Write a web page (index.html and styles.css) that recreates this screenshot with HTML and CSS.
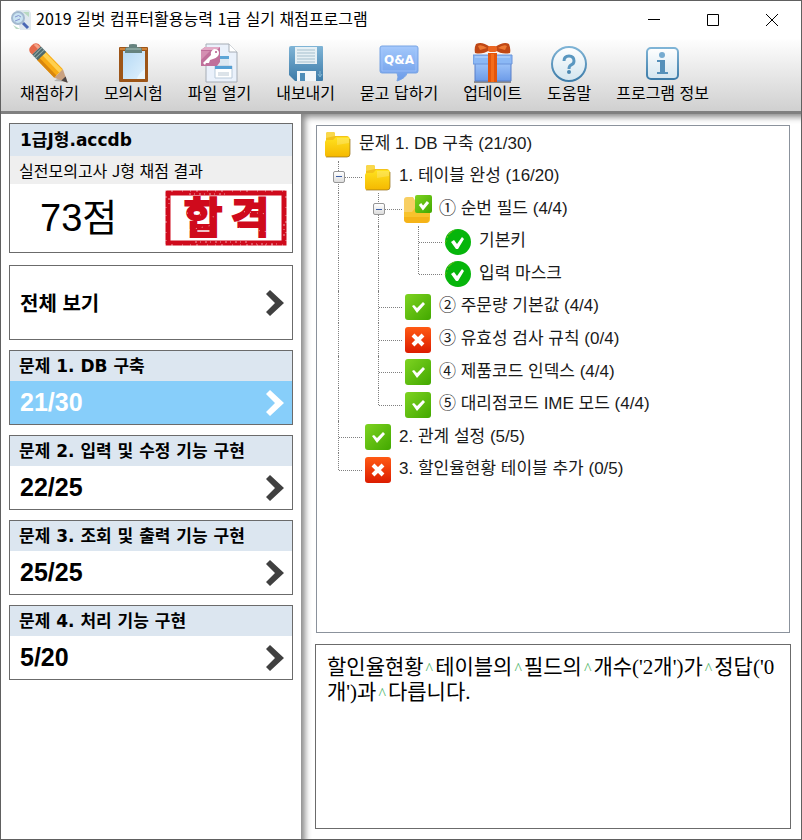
FILE: index.html
```html
<!DOCTYPE html>
<html lang="ko">

<head>
  <meta charset="UTF-8">
  <meta name="viewport" content="width=device-width, initial-scale=1">
  <title>2019 길벗 컴퓨터활용능력 1급 실기 채점프로그램</title>
  <link rel="stylesheet" href="styles.css">
</head>

<body>
  <svg class="sprite" aria-hidden="true">
    <defs>
      <linearGradient id="gold" x1="0" y1="0" x2="0" y2="1">
        <stop offset="0" stop-color="#ffe21f" />
        <stop offset="1" stop-color="#f5b800" />
      </linearGradient>
      <linearGradient id="green" x1="0" y1="0" x2="1" y2="1">
        <stop offset="0" stop-color="#7ed321" />
        <stop offset="1" stop-color="#42a800" />
      </linearGradient>
      <linearGradient id="red" x1="0" y1="0" x2="0" y2="1">
        <stop offset="0" stop-color="#ff5a14" />
        <stop offset="1" stop-color="#dc1c00" />
      </linearGradient>
      <linearGradient id="steel" x1="0" y1="0" x2="0" y2="1">
        <stop offset="0" stop-color="#7fb4d6" />
        <stop offset="1" stop-color="#3c7ba8" />
      </linearGradient>
      <linearGradient id="pale" x1="0" y1="0" x2="0" y2="1">
        <stop offset="0" stop-color="#ffffff" />
        <stop offset="1" stop-color="#d3e5ef" />
      </linearGradient>
      <linearGradient id="sky" x1="0" y1="0" x2="0" y2="1">
        <stop offset="0" stop-color="#a3c8fb" />
        <stop offset="1" stop-color="#6c9be8" />
      </linearGradient>
      <linearGradient id="paper" x1="0" y1="0" x2="1" y2="1">
        <stop offset="0" stop-color="#b5d9f5" />
        <stop offset="1" stop-color="#e0f1fd" />
      </linearGradient>
    </defs>
    <symbol id="folder" viewBox="0 0 28 28">
      <path d="M2 4q0-2 2-2h5q2 0 2 2v2h12q2 0 2 2v17H2z" fill="#f3c21a" />
      <path d="M2 4q0-2 2-2h5q2 0 2 2v2L2 8z" fill="#f9d84c" />
      <path d="M1 12q0-2 2-2h6l3-3h12q2 0 2 2v15q0 3-3 3H3q-2 0-2-2z" fill="url(#gold)" />
      <path d="M13 8h11q1 0 1 1v4l-12 2z" fill="#fff" opacity=".2" />
      <path d="M2 27h21q3 0 3-3V9" fill="none" stroke="#96711c" stroke-opacity=".7" />
    </symbol>
    <symbol id="folder-check" viewBox="0 0 28 28">
      <path d="M0 5q0-3 3-3h6l3 5v20H3q-3 0-3-3z" fill="#f8cf63" />
      <path d="M0 17h8l3-4h15v11q0 4-4 4H4q-4 0-4-4z" fill="#f8c32c" />
      <path d="M0 22h25v2q0 4-4 4H4q-4 0-4-4z" fill="#f3a80c" opacity=".6" />
      <rect x="11" y="0" width="17" height="18" rx="2" fill="url(#green)" />
      <path d="m16 9 3 4 5-6" fill="none" stroke="#fff" stroke-width="3" />
    </symbol>
    <symbol id="pass" viewBox="0 0 28 28">
      <rect x="1" y="1" width="26" height="26" rx="3" fill="url(#green)" />
      <path d="m8 13 2-1 3 3 6-6 2 2-8 9z" fill="#fff" />
    </symbol>
    <symbol id="fail" viewBox="0 0 28 28">
      <rect x="1" y="1" width="26" height="26" rx="3" fill="url(#red)" />
      <path d="m9 9 10 10m0-10L9 19" stroke="#fff" stroke-width="4" />
    </symbol>
    <symbol id="done" viewBox="0 0 28 28">
      <circle cx="14" cy="14" r="13" fill="#06b50b" />
      <path d="M3 10q2-6 8-8M1 15l2-3M5 6l3-2" fill="none" stroke="#7bbb18" stroke-dasharray="2 1" />
      <path d="m7 14 3-2 3 4 5-7 2 2-6 10h-2z" fill="#fff" />
    </symbol>
    <symbol id="chevron" viewBox="0 0 18 28">
      <path d="m0 5 4-4 14 13L4 27l-4-4 9-9z" fill="currentColor" />
    </symbol>
  </svg>

  <header class="titlebar">
    <svg class="app-icon" viewBox="0 0 20 20" aria-hidden="true">
      <path d="M5 0h13l2 3v17H9z" fill="#dfe8ee" />
      <path d="M12 2h6v5zM2 15l7 4H5z" fill="#b9d9c2" />
      <circle cx="7" cy="8" r="6" fill="#c9e3f2" stroke="#a3b9cf" stroke-width="2" />
      <path d="M4 7q4-3 6 0M4 11l5-2" stroke="#8794d0" fill="none" />
      <path d="m12 13 5 5" stroke="#4a68b4" stroke-width="3" />
    </svg>
    <h1 class="title">2019 길벗 컴퓨터활용능력 1급 실기 채점프로그램</h1>
    <div class="window-buttons">
      <button type="button" aria-label="최소화"><svg viewBox="0 0 12 12"><path d="M0 5.500h12" /></svg></button>
      <button type="button" aria-label="최대화"><svg viewBox="0 0 12 12"><path d="M.5.5h11v11H.5z" /></svg></button>
      <button type="button" aria-label="닫기"><svg viewBox="0 0 12 12"><path d="m0 0 12 12m0-12L0 12" /></svg></button>
    </div>
  </header>

  <nav class="toolbar">
    <button type="button" class="tool">
      <svg viewBox="0 0 40 40" aria-hidden="true">
        <path d="M25 38q3-3 9-2l6 3z" fill="#b4b4b4" />
        <g transform="translate(6 6) rotate(46)">
          <path d="M9-6h25V6H9z" fill="#f8ab14" />
          <path d="M9-5h25v4H9z" fill="#ffd04f" />
          <path d="M9 3h25v3H9z" fill="#d8860e" />
          <path d="M34-6 47 0 34 6z" fill="#c9a181" />
          <path d="m41-3 6 3-6 3z" fill="#4b4444" />
          <path d="M2-6h8V6H2z" fill="#4f6a6d" />
          <path d="M4-6V6M7-6V6" stroke="#93aaa8" />
          <path d="M2-6V6h-3q-4-1-4-6t4-6z" fill="#e5694a" />
          <path d="M2-5h-3q-2 0-3 3h6z" fill="#f4a287" />
        </g>
      </svg>
      <span>채점하기</span>
    </button>
    <button type="button" class="tool">
      <svg viewBox="0 0 40 40" aria-hidden="true">
        <rect x="6" y="4" width="29" height="35" rx="1" fill="#9d5518" />
        <path d="M7 5h27v2H7z" fill="#cf8136" />
        <path d="M10 8h22v28H10z" fill="url(#paper)" />
        <path d="M24 36q1-5 8-10v10z" fill="#e9f7ff" />
        <path d="M12 6q0-2 4-2V2q0-1 4-1t4 1v2q5 0 5 2v4H12z" fill="#66837f" />
        <path d="M13 6h15" stroke="#a9c4bd" />
      </svg>
      <span>모의시험</span>
    </button>
    <button type="button" class="tool">
      <svg viewBox="0 0 40 40" aria-hidden="true">
        <path d="M7 1h23l8 8v30H7z" fill="#eaf1fb" stroke="#a5acb5" />
        <path d="M30 1v8h8" fill="#fff" stroke="#a5acb5" />
        <path d="M18 13h12v11H18z" fill="#dde8f1" />
        <path d="M18 13h12v3H18z" fill="#5da5d7" />
        <path d="M16 23h17v12H16z" fill="#fff" stroke="#b9cada" />
        <path d="M16 23h17v3H16z" fill="#55a0d5" />
        <path d="M19 29h11v4H19z" fill="#dce3e9" />
        <path d="m2 7 4-3h15v15l-3 4H2z" fill="#c0709b" />
        <path d="m2 7 4-3h15l-3 3z" fill="#e2aac6" />
        <path d="M2 8h9L2 17z" fill="#d48fb2" />
        <path d="m4 20 8-8q-1-4 3-6 5 0 5 4t-6 6l-3 1-1 3H7l-1 2z" fill="#fff" />
        <circle cx="17" cy="9" r="1" fill="#b35589" />
      </svg>
      <span>파일 열기</span>
    </button>
    <button type="button" class="tool">
      <svg viewBox="0 0 40 40" aria-hidden="true">
        <path d="M5 3h31q1 0 1 1v33q0 1-1 1H9l-6-6V5q0-2 2-2z" fill="url(#steel)" />
        <path d="M9 4h22v17H9z" fill="#e6f0f5" />
        <path d="M11 7h18M11 10h18M11 13h18M11 16h18M11 19h18" stroke="#a5bfcd" />
        <path d="M11 28h19v10H11z" fill="#f2f7fa" />
        <path d="M14 30h5v8h-5z" fill="#4e8db8" />
        <path d="M34 28v5m-2-2 2 3 2-3" fill="none" stroke="#86b8d4" />
      </svg>
      <span>내보내기</span>
    </button>
    <button type="button" class="tool">
      <svg viewBox="0 0 40 40" aria-hidden="true">
        <path d="M3 3h34q2 0 2 2v23q0 2-2 2h-9q-1 5-10 8 2-4 0-8H3q-2 0-2-2V5q0-2 2-2z" fill="url(#sky)" stroke="#78a4e5" />
        <path d="M3 5h34v23H3z" fill="none" stroke="#a9caff" opacity=".6" />
        <text x="20" y="21" class="qna">Q&amp;A</text>
      </svg>
      <span>묻고 답하기</span>
    </button>
    <button type="button" class="tool">
      <svg viewBox="0 0 40 40" aria-hidden="true">
        <path d="M1 38h37v2H1z" fill="#8d8d8d" />
        <path d="M2 18h36v20H2z" fill="url(#sky)" stroke="#597ec8" />
        <path d="M0 12h39v9H0z" fill="#8bb8f5" stroke="#6b94da" />
        <path d="M2 14h35" stroke="#bfdaff" />
        <path d="M15 10h9v29h-9z" fill="#e3550c" />
        <path d="M18 11h3v28h-3z" fill="#f56c1a" />
        <path d="M17 4Q9-2 3 1 1 5 2 10q7 2 15-3zM22 4q9-6 14-3 2 5 1 9-8 2-15-3z" fill="#bf4715" />
        <path d="M14 5Q8 1 5 3l2 4zM25 5q6-4 9-2l-2 4z" fill="#ed7933" />
        <rect x="15" y="3" width="9" height="6" rx="2" fill="#ea6521" />
      </svg>
      <span>업데이트</span>
    </button>
    <button type="button" class="tool">
      <svg viewBox="0 0 40 40" aria-hidden="true">
        <circle cx="20" cy="21" r="17" fill="url(#pale)" stroke="url(#steel)" stroke-width="2" />
        <path d="M15 18q0-5 5-5t5 5q0 3-3 4-2 1-2 4" fill="none" stroke="#5a97c0" stroke-width="3" />
        <circle cx="20" cy="29" r="2" fill="#4b88b2" />
      </svg>
      <span>도움말</span>
    </button>
    <button type="button" class="tool">
      <svg viewBox="0 0 40 40" aria-hidden="true">
        <rect x="4" y="5" width="31" height="31" rx="4" fill="url(#pale)" stroke="url(#steel)" stroke-width="2" />
        <circle cx="19" cy="12" r="3" fill="#76abd0" />
        <path d="M14 17h8v12h3v2H14v-2h3V19h-3z" fill="#5490ba" />
      </svg>
      <span>프로그램 정보</span>
    </button>
  </nav>

  <main class="layout">
    <aside class="sidebar">
      <section class="card result">
        <h2 class="file-name">1급J형.accdb</h2>
        <p class="file-desc">실전모의고사 J형 채점 결과</p>
        <div class="result-score">
          <strong class="total">73점</strong>
          <svg class="stamp" viewBox="0 0 122 56" role="img" aria-label="합격">
            <rect x="3" y="3" width="116" height="50" fill="none" stroke="#cf0a1c" stroke-width="5" />
            <text x="38" y="43">합</text>
            <text x="85" y="43">격</text>
            <g fill="none" stroke="#fff" opacity=".6">
              <path d="M0 1h122M0 55h122M1 0v56M121 0v56" stroke-dasharray="1 5 2 9 1 7" />
              <path d="M24 4h40m22 50h28M30 52h52M119 34v14M4 8v9" stroke-dasharray="2 3 1 4" />
              <path d="m22 23 28 4m-26 13 24-5m24-14 30 3m-28 14 30 4" stroke-dasharray="1 6 1 5" />
            </g>
          </svg>
        </div>
      </section>

      <button type="button" class="card all">
        <span>전체 보기</span>
        <svg class="chevron"><use href="#chevron" /></svg>
      </button>

      <button type="button" class="card question active">
        <span class="question-title">문제 1. DB 구축</span>
        <span class="question-score">21/30 <svg class="chevron"><use href="#chevron" /></svg></span>
      </button>
      <button type="button" class="card question">
        <span class="question-title">문제 2. 입력 및 수정 기능 구현</span>
        <span class="question-score">22/25 <svg class="chevron"><use href="#chevron" /></svg></span>
      </button>
      <button type="button" class="card question">
        <span class="question-title">문제 3. 조회 및 출력 기능 구현</span>
        <span class="question-score">25/25 <svg class="chevron"><use href="#chevron" /></svg></span>
      </button>
      <button type="button" class="card question">
        <span class="question-title">문제 4. 처리 기능 구현</span>
        <span class="question-score">5/20 <svg class="chevron"><use href="#chevron" /></svg></span>
      </button>
    </aside>

    <section class="content">
      <div class="tree-panel">
        <ul class="tree">
          <li><svg><use href="#folder" /></svg><span>문제 1. DB 구축 (21/30)</span></li>
          <li><i class="guide tee"><button type="button" class="toggle" aria-label="접기"></button></i><svg><use href="#folder" /></svg><span>1. 테이블 완성 (16/20)</span></li>
          <li><i class="guide"></i><i class="guide tee"><button type="button" class="toggle" aria-label="접기"></button></i><svg><use href="#folder-check" /></svg><span>① 순번 필드 (4/4)</span></li>
          <li><i class="guide"></i><i class="guide"></i><i class="guide tee"></i><svg><use href="#done" /></svg><span>기본키</span></li>
          <li><i class="guide"></i><i class="guide"></i><i class="guide tee last"></i><svg><use href="#done" /></svg><span>입력 마스크</span></li>
          <li><i class="guide"></i><i class="guide tee"></i><svg><use href="#pass" /></svg><span>② 주문량 기본값 (4/4)</span></li>
          <li><i class="guide"></i><i class="guide tee"></i><svg><use href="#fail" /></svg><span>③ 유효성 검사 규칙 (0/4)</span></li>
          <li><i class="guide"></i><i class="guide tee"></i><svg><use href="#pass" /></svg><span>④ 제품코드 인덱스 (4/4)</span></li>
          <li><i class="guide"></i><i class="guide tee last"></i><svg><use href="#pass" /></svg><span>⑤ 대리점코드 IME 모드 (4/4)</span></li>
          <li><i class="guide tee"></i><svg><use href="#pass" /></svg><span>2. 관계 설정 (5/5)</span></li>
          <li><i class="guide tee last"></i><svg><use href="#fail" /></svg><span>3. 할인율현황 테이블 추가 (0/5)</span></li>
        </ul>
      </div>

      <p class="message">할인율현황<b>^</b>테이블의<b>^</b>필드의<b>^</b>개수('2개')가<b>^</b>정답('0개')과<b>^</b>다릅니다.</p>
    </section>
  </main>
</body>

</html>
```

FILE: styles.css
```css
:root {
  --line: #6b6b6b;
  --head: #dce6f0;
  --active: #87cefa;
  --kr: "Noto Sans CJK KR", sans-serif;
}

* {
  box-sizing: border-box;
}

body {
  display: flex;
  flex-direction: column;
  min-height: 100vh;
  margin: 0;
  border: 1px solid #606060;
  background: #fff;
  color: #000;
  font-family: var(--kr);
  font-size: 16px;
}

button {
  padding: 0;
  border: 0;
  background: none;
  color: inherit;
  font: inherit;
  cursor: pointer;
}

h1, h2, p, ul {
  margin: 0;
  padding: 0;
}

.sprite {
  position: absolute;
  width: 0;
  height: 0;
}

/* Title bar */
.titlebar {
  display: flex;
  align-items: center;
  height: 38px;
  padding-left: 10px;
}

.app-icon {
  width: 20px;
  height: 20px;
}

.title {
  flex: 1;
  padding: 0 0 4px 5px;
  font-size: 16px;
  font-weight: 400;
  line-height: 24px;
}

.window-buttons {
  display: flex;
}

.window-buttons button {
  display: flex;
  align-items: center;
  justify-content: center;
  width: 59px;
  height: 38px;
}

.window-buttons svg {
  width: 12px;
  height: 12px;
  fill: none;
  stroke: #000;
}

/* Toolbar */
.toolbar {
  display: flex;
  gap: 25px;
  padding: 4px 19px 9px;
  border-bottom: 3px solid #808080;
  background: linear-gradient(#fefefe, #d0d0d0);
}

.tool {
  display: flex;
  flex-direction: column;
  align-items: center;
  line-height: 19px;
  white-space: nowrap;
}

.tool svg {
  width: 40px;
  height: 40px;
}

.qna {
  fill: #fff;
  font: bold 12px "DejaVu Sans", sans-serif;
  text-anchor: middle;
}

.layout {
  display: flex;
  flex: 1;
}

/* Sidebar */
.sidebar {
  display: flex;
  flex-direction: column;
  gap: 10px;
  width: 300px;
  padding: 9px 8px;
}

.card {
  border: 1px solid var(--line);
  background: #fff;
  text-align: left;
}

.result {
  margin-bottom: 2px;
}

.file-name {
  padding: 0 10px;
  background: var(--head);
  font: bold 17px/32px "DejaVu Sans", var(--kr);
}

.file-desc {
  padding: 0 9px;
  background: #efefef;
  font-size: 16px;
  line-height: 28px;
}

.result-score {
  display: flex;
  align-items: center;
  justify-content: space-between;
  height: 68px;
  padding: 0 5px 0 30px;
}

.total {
  font: 38px/60px "Liberation Sans", var(--kr);
}

.stamp {
  width: 122px;
  height: 56px;
  overflow: visible;
}

.stamp text {
  fill: #cf0a1c;
  stroke: #cf0a1c;
  stroke-width: 2px;
  font: bold 42px var(--kr);
  text-anchor: middle;
}

.all {
  display: flex;
  align-items: center;
  justify-content: space-between;
  height: 75px;
  padding: 0 8px 0 10px;
  font-size: 20px;
  font-weight: 700;
}

.question-title {
  display: block;
  padding-left: 9px;
  background: var(--head);
  font: bold 17px/30px "DejaVu Sans", var(--kr);
}

.question-score {
  display: flex;
  align-items: center;
  justify-content: space-between;
  height: 43px;
  padding: 0 8px 0 10px;
  font: bold 25px "Liberation Sans", sans-serif;
}

.chevron {
  width: 18px;
  height: 28px;
  color: #404040;
}

.active .question-score {
  background: var(--active);
  color: #fff;
}

.active .chevron {
  color: #fff;
}

/* Tree and message */
.content {
  display: flex;
  flex: 1;
  flex-direction: column;
  gap: 11px;
  padding: 11px 10px 10px 14px;
  box-shadow: inset 7px 6px 6px -3px #888;
}

.tree-panel {
  flex: 1;
  margin: 0 1px;
  padding: 2px;
  border: 1px solid #8b929c;
}

.tree {
  display: grid;
  grid-template-rows: repeat(11, 1fr);
  height: 358px;
  list-style: none;
}

.tree li {
  display: flex;
  align-items: center;
  color: #1a1a1a;
  font: 17px/28px "Liberation Sans", var(--kr);
  white-space: nowrap;
}

.tree svg {
  width: 28px;
  height: 28px;
  margin: 0 7px 0 5px;
}

.tree span {
  padding-bottom: 1px;
}

.guide {
  position: relative;
  display: flex;
  align-items: center;
  justify-content: center;
  align-self: stretch;
  width: 40px;
}

.guide::before {
  content: "";
  position: absolute;
  top: 0;
  bottom: 0;
  left: 19px;
  border-left: 1px dotted #808080;
}

.guide.last::before {
  bottom: 50%;
}

.guide.tee::after {
  content: "";
  position: absolute;
  top: 50%;
  right: -3px;
  left: 20px;
  border-top: 1px dotted #808080;
}

.toggle {
  position: relative;
  z-index: 1;
  display: flex;
  align-items: center;
  justify-content: center;
  width: 12px;
  height: 12px;
  border: 1px solid #969696;
  border-radius: 2px;
  background: linear-gradient(#fff, #ddd);
}

.toggle::before {
  content: "";
  width: 6px;
  height: 1px;
  background: #3c5fa8;
}

.message {
  min-height: 185px;
  padding: 10px 11px;
  border: 1px solid var(--line);
  font: 21px/25px "Liberation Serif", var(--kr);
}

.message b {
  padding: 0 2px;
  color: #4fb56b;
  font-size: 16px;
  font-weight: 400;
  line-height: 0;
}
```
